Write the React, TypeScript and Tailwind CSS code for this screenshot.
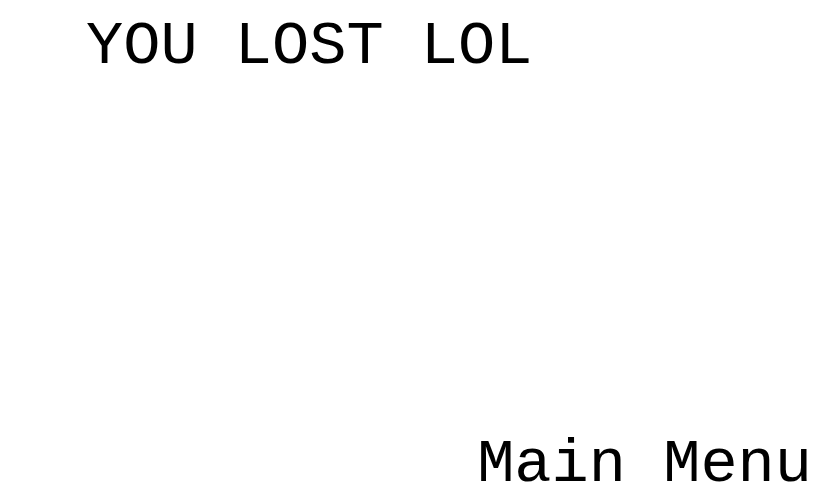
export default function App() {
  return (
    <div
      className="w-[820px] h-[500px] bg-white text-black flex flex-col justify-between overflow-hidden"
      style={{ fontFamily: '"Liberation Mono", "Courier New", monospace' }}
    >
      <div className="pl-[86px] pt-[16px] text-[62px] leading-[62px]">YOU LOST LOL</div>
      <div className="self-end pr-[8px] pb-[4px] text-[62px] leading-[62px]">Main Menu</div>
    </div>
  );
}
